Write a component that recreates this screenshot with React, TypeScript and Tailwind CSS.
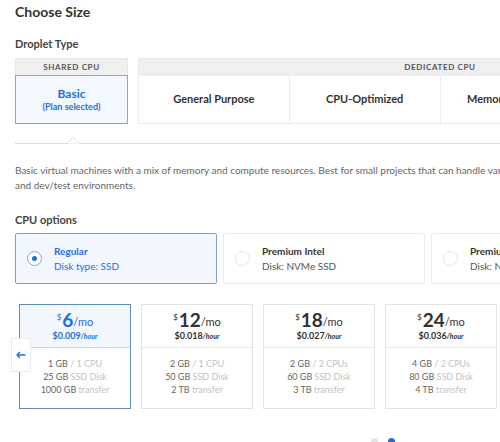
import React from 'react';

const font = { fontFamily: 'Lato, "Open Sans", Arial, sans-serif' };

interface Plan {
    price: string;
    hour: string;
    ram: string;
    cpu: string;
    disk: string;
    transfer: string;
    selected?: boolean;
}

const plans: Plan[] = [
    { price: '6', hour: '$0.009', ram: '1 GB', cpu: '1 CPU', disk: '25 GB', transfer: '1000 GB', selected: true },
    { price: '12', hour: '$0.018', ram: '2 GB', cpu: '1 CPU', disk: '50 GB', transfer: '2 TB' },
    { price: '18', hour: '$0.027', ram: '2 GB', cpu: '2 CPUs', disk: '60 GB', transfer: '3 TB' },
    { price: '24', hour: '$0.036', ram: '4 GB', cpu: '2 CPUs', disk: '80 GB', transfer: '4 TB' },
];

const dedicated = ['General Purpose', 'CPU-Optimized', 'Memory-Optimized', 'Storage-Optimized'];

const PlanCard: React.FC<{ plan: Plan }> = ({ plan }) => {
    const sel = plan.selected;
    return (
        <div className={`w-[112px] shrink-0 h-[105px] border ${sel ? 'border-[#5f8ab5]' : 'border-[#e4e4e4]'} bg-white flex flex-col`}>
            <div className={`h-[43px] flex flex-col items-center justify-center border-b ${sel ? 'bg-[#f2f7fe] border-[#c9d9ec]' : 'border-[#e8e8e8]'}`}>
                <div className={`flex items-start leading-none ${sel ? 'text-[#1f6fd6]' : 'text-[#333]'}`}>
                    <span className="text-[8px] mt-[2px] mr-[1px]">$</span>
                    <span className="text-[19px] font-bold leading-[18px]">{plan.price}</span>
                    <span className="text-[11px] mt-[5px]">/mo</span>
                </div>
                <div className={`text-[9px] font-bold leading-[12px] mt-[1px] ${sel ? 'text-[#1f6fd6]' : 'text-[#333]'}`}>
                    {plan.hour}<span className="text-[7px] italic">/hour</span>
                </div>
            </div>
            <div className="flex-1 flex flex-col items-center pt-[9px] text-[9px] leading-[13px] text-[#666]">
                <div>{plan.ram} <span className="text-[#c2c2c2]">/ {plan.cpu}</span></div>
                <div>{plan.disk} <span className="text-[#c2c2c2]">SSD Disk</span></div>
                <div>{plan.transfer} <span className="text-[#c2c2c2]">transfer</span></div>
            </div>
        </div>
    );
};

const CpuOption: React.FC<{ title: string; sub: string; selected?: boolean }> = ({ title, sub, selected }) => (
    <div className={`w-[202px] shrink-0 h-[51px] border rounded-[2px] flex items-center ${selected ? 'bg-[#f2f7fe] border-[#7f9fc4]' : 'bg-white border-[#ececec]'}`}>
        <div className={`ml-[11px] w-[15px] h-[15px] rounded-full border flex items-center justify-center ${selected ? 'border-[#8aa6c8] bg-white' : 'border-[#e6e6e6]'}`}>
            {selected && <div className="w-[5px] h-[5px] rounded-full bg-[#1f6fd6]" />}
        </div>
        <div className="ml-[12px]">
            <div className={`text-[10px] font-bold leading-[15px] ${selected ? 'text-[#1f6fd6]' : 'text-[#333]'}`}>{title}</div>
            <div className={`text-[10px] leading-[15px] ${selected ? 'text-[#1f6fd6]' : 'text-[#555]'}`}>{sub}</div>
        </div>
    </div>
);

export default function App() {
    return (
        <div className="w-[500px] h-[442px] overflow-hidden bg-white" style={font}>
            <div className="w-[760px] pl-[15px] pt-[2px]">
                <h2 className="text-[14px] leading-[20px] font-bold text-[#333]">Choose Size</h2>
                <div className="mt-[15px] text-[11px] leading-[14px] font-bold text-[#444]">Droplet Type</div>

                {/* droplet type tabs */}
                <div className="mt-[7px] flex gap-[10px]">
                    <div className="w-[113px] shrink-0">
                        <div className="h-[17px] bg-[#efefef] border border-b-0 border-[#e6e6e6] flex items-center justify-center text-[8px] font-bold tracking-[0.08em] text-[#555]">
                            SHARED CPU
                        </div>
                        <div className="h-[49px] border border-[#88a6c9] bg-[#f3f8fe] flex flex-col items-center justify-center">
                            <div className="text-[12px] font-bold leading-[15px] text-[#1f6fd6]">Basic</div>
                            <div className="text-[9px] font-bold leading-[12px] text-[#1f6fd6]">(Plan selected)</div>
                        </div>
                    </div>
                    <div className="w-[604px] shrink-0">
                        <div className="h-[17px] bg-[#efefef] border border-b-0 border-[#e6e6e6] flex items-center justify-center text-[8px] font-bold tracking-[0.08em] text-[#555]">
                            DEDICATED CPU
                        </div>
                        <div className="h-[49px] flex border border-[#ececec]">
                            {dedicated.map((d, i) => (
                                <div key={d} className={`flex-1 flex items-center justify-center text-[11px] font-bold text-[#333] ${i > 0 ? 'border-l border-[#ececec]' : ''}`}>
                                    {d}
                                </div>
                            ))}
                        </div>
                    </div>
                </div>

                {/* underline with caret */}
                <div className="relative mt-[19px] h-px bg-[#dedede]">
                    <svg className="absolute left-[52px] -top-[6px]" width="13" height="7" viewBox="0 0 13 7">
                        <path d="M0 6.5 L6.5 0.5 L13 6.5" fill="white" stroke="#dedede" strokeWidth="1" />
                    </svg>
                </div>

                <p className="mt-[19px] text-[10px] leading-[15px] text-[#666] whitespace-nowrap">
                    Basic virtual machines with a mix of memory and compute resources. Best for small projects that can handle variable levels of CPU performance, like blogs, web apps
                    <br />
                    and dev/test environments.
                </p>

                <div className="mt-[20px] text-[11px] leading-[14px] font-bold text-[#444]">CPU options</div>
                <div className="mt-[6px] flex gap-[6px]">
                    <CpuOption title="Regular" sub="Disk type: SSD" selected />
                    <CpuOption title="Premium Intel" sub="Disk: NVMe SSD" />
                    <CpuOption title="Premium AMD" sub="Disk: NVMe SSD" />
                </div>

                {/* plans */}
                <div className="relative mt-[20px] flex gap-[10px] pl-[4px]">
                    {plans.map((p) => (
                        <PlanCard key={p.price} plan={p} />
                    ))}
                    <button className="absolute left-[-4px] top-[34px] w-[20px] h-[34px] bg-white border border-[#ececec] flex items-center justify-center text-[#1f6fd6]">
                        <svg width="10" height="8" viewBox="0 0 10 8" fill="none" stroke="#1f6fd6" strokeWidth="1.3">
                            <path d="M9.5 4 H1 M4 1 L1 4 L4 7" />
                        </svg>
                    </button>
                </div>

                <div className="mt-[29px] flex gap-[10px] pl-[356px]">
                    <div className="w-[7px] h-[7px] rounded-full bg-[#e4e4e4]" />
                    <div className="w-[7px] h-[7px] rounded-full bg-[#1f6fd6]" />
                </div>
            </div>
        </div>
    );
}
